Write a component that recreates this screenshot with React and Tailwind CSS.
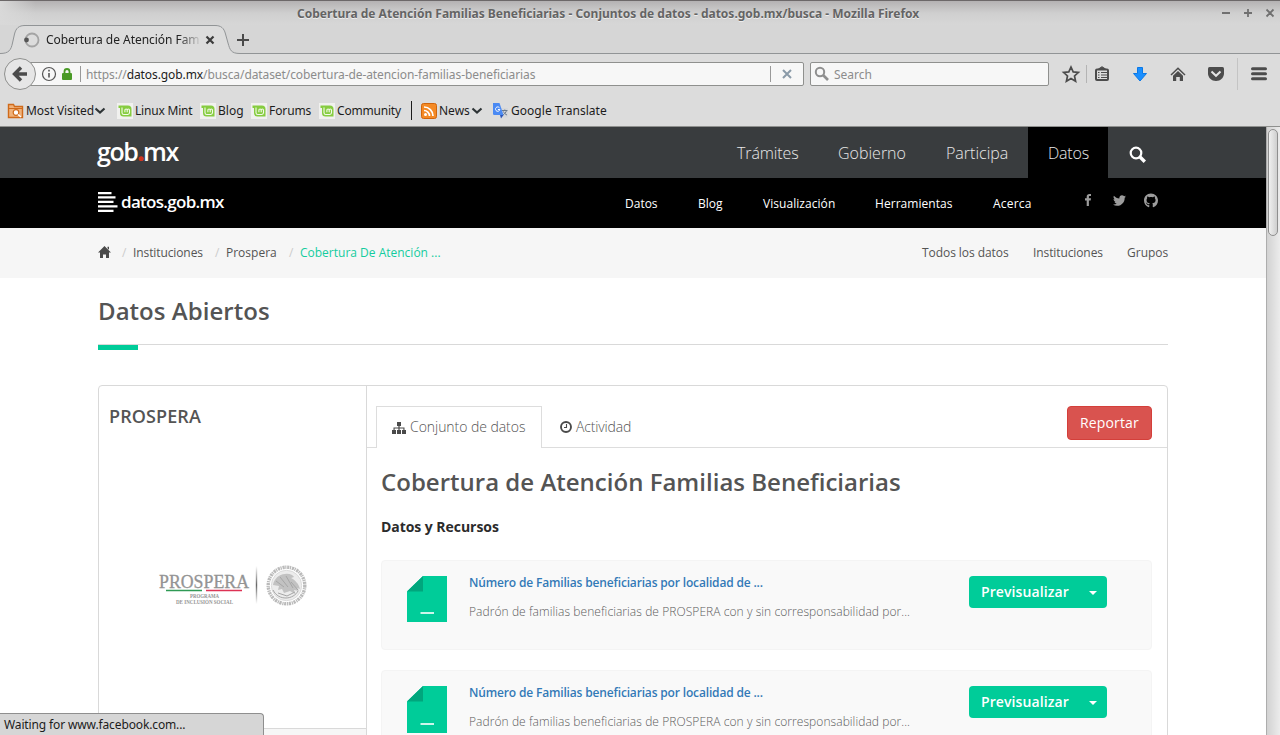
import React from 'react';
import { FaTwitter, FaGithub } from 'react-icons/fa';

const UI = "font-['Noto_Sans',sans-serif]";

function MintIcon() {
  return (
    <svg width="16" height="16" viewBox="0 0 16 16" className="shrink-0">
      <rect width="16" height="16" fill="#f1f1ef" />
      <path d="M1.500 2.500h9.500a3.500 3.500 0 0 1 3.500 3.500v7.500H6.500a3.500 3.500 0 0 1-3.500-3.500V5H1.500z" fill="#86cc40" />
      <path d="M5 4.500v5.300a1.800 1.800 0 0 0 1.800 1.700h4a1.800 1.800 0 0 0 1.700-1.700V7.200a1.100 1.100 0 0 0-2.300 0v2M10.200 7.200a1.100 1.100 0 0 0-2.300 0v2" fill="none" stroke="#f4fbea" strokeWidth="1.100" />
    </svg>
  );
}

function Chevron() {
  return (
    <svg width="12" height="8" viewBox="0 0 12 8" className="-mt-px shrink-0">
      <path d="M1.500 1.500l4.500 4 4.500-4" fill="none" stroke="#2e3436" strokeWidth="2.200" />
    </svg>
  );
}

function TitleBar() {
  return (
    <div className="flex h-[25px] shrink-0 border-t border-[#6c6869] bg-linear-to-b from-[#b4b2b3] via-[#cfcfcf] via-50% to-[#d7d7d7]">
      <div className="w-[297px] bg-linear-to-r from-[#d9d9d9] to-transparent to-12%" />
      <div className="w-[915px] pt-px text-[12px] leading-[24px] font-bold whitespace-nowrap text-[#646464] [text-shadow:0_1px_0_#eee]">
        Cobertura de Atención Familias Beneficiarias - Conjuntos de datos - datos.gob.mx/busca - Mozilla Firefox
      </div>
      <svg width="68" height="24" viewBox="1212 1 68 24" fill="none" stroke="#707070" strokeWidth="1.800">
        <path d="M1222 13h8M1244 13h8M1248 9v8M1266.500 9.500l7 7M1273.500 9.500l-7 7" />
      </svg>
    </div>
  );
}

function TabStrip() {
  return (
    <div className="relative flex h-[29px] shrink-0 items-center bg-[#d6d6d6]">
      <svg width="1280" height="29" viewBox="0 25 1280 29" className="absolute inset-0">
        <path d="M0 53.500C9 53.500 11 50 12.500 43L14.500 34C16 28 19 25.500 25 25.500H215C221 25.500 224 28 225.500 34L228 43C230 50 231 53.500 240 53.500H1280V54H0z" fill="#dcdcdc" />
        <path d="M0 53.500C9 53.500 11 50 12.500 43L14.500 34C16 28 19 25.500 25 25.500H215C221 25.500 224 28 225.500 34L228 43C230 50 231 53.500 240 53.500H1280" fill="none" stroke="#919496" />
        <circle cx="32" cy="40" r="6.500" fill="none" stroke="#a4a4a4" strokeWidth="1.800" />
        <circle cx="26.500" cy="40" r="2.400" fill="#555" />
        <path d="M206.500 36.500l7 7M213.500 36.500l-7 7" stroke="#3c3c3c" strokeWidth="2.200" />
        <path d="M237 40h12M243 34v12" stroke="#4a4a4a" strokeWidth="2" />
      </svg>
      <div className="relative ml-[46px] w-[156px] text-[12px] leading-[20px] tracking-[-0.04px] whitespace-nowrap text-[#222] [mask-image:linear-gradient(to_right,#000_85%,transparent)]">
        Cobertura de Atención Fam
      </div>
    </div>
  );
}

function NavBar() {
  return (
    <div className="flex h-[40px] shrink-0 items-center bg-[#dcdcdc] text-[12px]">
      <svg width="34" height="34" viewBox="0 0 34 34" className="z-10 ml-[3px] shrink-0">
        <circle cx="17" cy="17" r="15.500" fill="#e6e6e6" stroke="#8f908e" />
        <path d="M24 17H12.500M18 10.500L11.500 17l6.500 6.500" fill="none" stroke="#4c4c4c" strokeWidth="3.400" />
      </svg>
      <div className="-ml-[8px] flex h-[24px] w-[775px] items-center rounded-[2px] border border-[#8f908e] bg-[#f7f7f7]">
        <svg width="56" height="22" viewBox="30 63 56 22" className="shrink-0">
          <circle cx="49" cy="74" r="6.500" fill="none" stroke="#555" strokeWidth="1.200" />
          <path d="M49 73v4.500M49 69.800v1.800" stroke="#555" strokeWidth="1.600" />
          <path d="M64.500 73v-1.500a2.500 2.500 0 0 1 5 0V73" fill="none" stroke="#4a9a26" strokeWidth="1.800" />
          <rect x="62" y="73" width="10" height="7" rx="1" fill="#4a9a26" />
          <path d="M80.500 66v16" stroke="#999" />
        </svg>
        <div className="w-[684px] pt-[2px] tracking-[-0.09px] whitespace-nowrap text-[#8c8c8c]">
          https://<span className="text-[#1c1c1c]">datos.gob.mx</span>/busca/dataset/cobertura-de-atencion-familias-beneficiarias
        </div>
        <svg width="32" height="22" viewBox="770 63 32 22" className="shrink-0">
          <path d="M770.500 66v16" stroke="#999" />
          <path d="M783 70l8 8M791 70l-8 8" stroke="#8a9aa8" strokeWidth="2" />
        </svg>
      </div>
      <div className="ml-[6px] flex h-[24px] w-[239px] items-center rounded-[2px] border border-[#8f908e] bg-[#f7f7f7] text-[#8c8c8c]">
        <svg width="23" height="22" viewBox="811 63 23 22">
          <circle cx="820" cy="72" r="4.200" fill="none" stroke="#8f8f8f" strokeWidth="2" />
          <path d="M823 75l5 5" stroke="#8f8f8f" strokeWidth="2.600" />
        </svg>
        <span className="pt-[2px]">Search</span>
      </div>
      <svg width="231" height="40" viewBox="1049 54 231 40" fill="none" stroke="#4c4c4c">
        <path d="M1071 67l2.200 4.900 5.200.5-3.900 3.600 1.100 5.300-4.600-2.700-4.600 2.700 1.100-5.300-3.900-3.600 5.200-.5z" strokeWidth="1.700" />
        <path d="M1086.500 65v18" stroke="#b4b4b4" />
        <rect x="1096" y="69.500" width="12" height="10.500" rx="1" strokeWidth="2" />
        <path d="M1098.500 69l3.500-2.300 3.500 2.300z" fill="#4c4c4c" strokeWidth="1" />
        <path d="M1098 72.500h1.500M1101 72.500h6M1098 75h1.500M1101 75h6M1098 77.500h1.500M1101 77.500h6" strokeWidth="1.200" />
        <path d="M1137.500 67.500h5v6h4l-6.500 7.500-6.500-7.500h4z" fill="#1a8fff" stroke="#0a78e6" />
        <path d="M1171 75l7-6.800 7 6.800" strokeWidth="1.500" />
        <path d="M1173 75.700l5-4.800 5 4.800V81h-3.200v-4h-3.600v4H1173z" fill="#4c4c4c" stroke="none" />
        <path d="M1209.500 67h13q1.500 0 1.500 1.500v5c0 4-3.500 7.500-8 7.500s-8-3.500-8-7.500v-5q0-1.500 1.500-1.500z" fill="#4c4c4c" stroke="none" />
        <path d="M1211.500 71.500l4.500 4.300 4.500-4.300" stroke="#e4e4e4" strokeWidth="2" />
        <path d="M1237.500 58v32" stroke="#c4c4c4" />
        <path d="M1252.500 68.700h13M1252.500 73.700h13M1252.500 78.700h13" strokeWidth="3" strokeLinecap="round" />
      </svg>
    </div>
  );
}

function Bookmarks() {
  return (
    <div className="flex h-[33px] shrink-0 items-center border-b border-[#8f908e] bg-[#dcdcdc] pt-px pl-[7px] text-[12px] whitespace-nowrap text-[#1c1c1c]">
      <div className="flex w-[110px] items-center gap-[2px]">
        <svg width="17" height="16" viewBox="0 0 17 16">
          <path d="M1.500 14.500v-13h5l1 2h8v11z" fill="#f0b27a" stroke="#cf6a1a" strokeWidth="1.400" />
          <path d="M1.500 5.500h14" stroke="#cf6a1a" />
          <circle cx="9" cy="9.500" r="2.800" fill="#fff" stroke="#cf6a1a" strokeWidth="1.200" />
          <path d="M11 11.500l3 2.500" stroke="#fff" strokeWidth="1.500" />
        </svg>
        <span className="flex items-center pt-px tracking-[-0.08px]">Most Visited<Chevron /></span>
      </div>
      <div className="flex w-[83px] items-center gap-[2px]"><MintIcon /><span className="pt-px tracking-[-0.2px]">Linux Mint</span></div>
      <div className="flex w-[51px] items-center gap-[2px]"><MintIcon /><span className="pt-px">Blog</span></div>
      <div className="flex w-[68px] items-center gap-[2px]"><MintIcon /><span className="pt-px tracking-[-0.1px]">Forums</span></div>
      <div className="flex w-[92px] items-center gap-[2px]"><MintIcon /><span className="pt-px tracking-[-0.2px]">Community</span></div>
      <div className="h-[19px] w-px bg-[#1c1c1c]" />
      <div className="ml-[9px] flex w-[72px] items-center gap-[2px]">
        <svg width="16" height="16" viewBox="0 0 16 16" className="shrink-0">
          <rect x=".5" y=".5" width="15" height="15" rx="2" fill="#f48a25" stroke="#d0650c" />
          <circle cx="4.500" cy="11.500" r="1.500" fill="#fff" />
          <path d="M3 7.500a5.500 5.500 0 0 1 5.500 5.500M3 4a9 9 0 0 1 9 9" fill="none" stroke="#fff" strokeWidth="1.700" />
        </svg>
        <span className="flex items-center gap-px pt-px">News<Chevron /></span>
      </div>
      <div className="flex items-center gap-[2px]">
        <svg width="16" height="16" viewBox="0 0 16 16" className="shrink-0">
          <path d="M6 5h9v9.500H8z" fill="#d5d7da" />
          <path d="M9 7.500h5.500M11.800 6.500v1M13.500 7.500c-.5 2-2 3.500-3.500 4.500M10.500 8.500c.5 1.500 2 3 3.500 3.500" fill="none" stroke="#6b7a8c" />
          <path d="M0 0h6.500l4 12H1.200A1.200 1.200 0 0 1 0 10.800z" fill="#4a89f3" />
          <path d="M7 12h3.500L8 15.500z" fill="#2a55b8" />
          <path d="M6.500 4.800a2.200 2.200 0 1 0 .4 1.700H4.900" fill="none" stroke="#fff" strokeWidth="1" />
        </svg>
        <span className="pt-px tracking-[0.03px]">Google Translate</span>
      </div>
    </div>
  );
}

function SiteHeader() {
  return (
    <>
      <div className="flex h-[51px] shrink-0 bg-[#393c3e] pl-[97px] text-[16px] leading-[53px] font-light whitespace-nowrap text-[#e8e8e8]">
        <div className="w-[620px] text-[25px] leading-[49px] font-semibold tracking-[-1.45px] text-white">
          gob<span className="font-extrabold text-[#d0341c]">.</span>mx
        </div>
        <div className="w-[101px] pl-[20px] tracking-[-0.1px]">Trámites</div>
        <div className="w-[108px] pl-[20px]">Gobierno</div>
        <div className="w-[102px] pl-[20px]">Participa</div>
        <div className="w-[80px] bg-black pl-[20px] tracking-[-0.2px]">Datos</div>
        <svg width="60" height="51" viewBox="1108 127 60 51" fill="none" stroke="#fff">
          <circle cx="1136" cy="153" r="5.300" strokeWidth="2.200" />
          <path d="M1139.800 156.800l5 5" strokeWidth="3.400" />
        </svg>
      </div>
      <div className="flex h-[50px] shrink-0 bg-black pl-[98px] text-[12px] leading-[50px] whitespace-nowrap text-white">
        <svg width="23" height="50" viewBox="98 178 23 50" fill="#fff">
          <path d="M98 192h13.500v2.200H98zM98 196.300h17.500v2.200H98zM98 200.800h15.500v2.200H98zM98 205.300h19.500v2.200H98zM98 209.800h15.500v2.200H98z" />
        </svg>
        <div className="w-[504px] text-[17px] leading-[47px] font-semibold tracking-[-0.7px]">datos.gob.mx</div>
        <div className="w-[73px] pt-px">Datos</div>
        <div className="w-[65px] pt-px">Blog</div>
        <div className="w-[112px] pt-px tracking-[0.05px]">Visualización</div>
        <div className="w-[118px] pt-px tracking-[0.05px]">Herramientas</div>
        <div className="w-[92px] pt-px tracking-[0.2px]">Acerca</div>
        <div className="flex h-[44px] items-center text-[#9c9c9c]">
          <svg width="6" height="12" viewBox="0 0 6 12" fill="currentColor">
            <path d="M6 .1v1.900H4.900c-.9 0-1 .4-1 1v1.300H6l-.3 2.100H3.900V12H1.700V6.400H0V4.300h1.700V2.800C1.700 1 2.800 0 4.400 0 5.200 0 5.800.05 6 .1z" />
          </svg>
          <FaTwitter className="ml-[22px] h-[13px] w-[13px]" />
          <FaGithub className="ml-[18px] h-[15px] w-[14px]" />
        </div>
      </div>
    </>
  );
}

function Breadcrumb() {
  return (
    <div className="flex h-[50px] shrink-0 items-center bg-[#f6f6f6] pl-[98px] text-[12px] whitespace-nowrap text-[#545454]">
      <svg width="24" height="14" viewBox="0 0 24 14" fill="#4a4a4a">
        <path d="M6.500 0L13 6.500h-2v5.500H8V8.500H5V12H2V6.500H0zM9.500.8h1.500v3l-1.500-1.500z" />
      </svg>
      <span className="w-[11px] text-[#ccc]">/</span>
      <span className="w-[82px] tracking-[-0.1px]">Instituciones</span>
      <span className="w-[11px] text-[#ccc]">/</span>
      <span className="w-[63px]">Prospera</span>
      <span className="w-[11px] text-[#ccc]">/</span>
      <span className="w-[622px] text-[#14cc9e]">Cobertura De Atención ...</span>
      <span className="w-[111px] tracking-[-0.06px]">Todos los datos</span>
      <span className="w-[94px] tracking-[-0.1px]">Instituciones</span>
      <span>Grupos</span>
    </div>
  );
}

function ProsperaLogo() {
  return (
    <svg width="152" height="46" viewBox="158 563 152 46" className="ml-[59px]">
      <g fontFamily="Liberation Serif, serif" fill="#949494">
        <text x="159" y="587.500" fontSize="19" textLength="90" lengthAdjust="spacingAndGlyphs" stroke="#949494" strokeWidth=".3">PROSPERA</text>
        <text x="190" y="598" fontSize="5.500" fontWeight="700" textLength="29" lengthAdjust="spacingAndGlyphs">PROGRAMA</text>
        <text x="176" y="604" fontSize="5.500" fontWeight="700" textLength="57" lengthAdjust="spacingAndGlyphs">DE INCLUSIÓN SOCIAL</text>
      </g>
      <path d="M166 590.500h36" stroke="#2f9a55" strokeWidth="1.500" />
      <path d="M206 590.500h36" stroke="#dd3355" strokeWidth="1.500" />
      <path d="M255.800 566h1.400v38h-1.400z" fill="url(#rule)" />
      <defs>
        <linearGradient id="rule" x1="0" y1="0" x2="0" y2="1">
          <stop offset="0" stopColor="#fff" />
          <stop offset=".5" stopColor="#666" />
          <stop offset="1" stopColor="#fff" />
        </linearGradient>
      </defs>
      <circle cx="286.500" cy="585.500" r="18.300" fill="none" stroke="#bababa" strokeWidth="3.400" strokeDasharray="2.200 .6 1.200 .8" />
      <circle cx="286.500" cy="585.500" r="15.200" fill="#ececec" stroke="#d4d4d4" strokeWidth=".8" />
      <path d="M273 585c1-6 6-11 12-11 4-1 8 1 9 3l-3 1c4 2 8 6 9 11l-3-1 2 3-5-1 1 4-5-3-6 2-2-4-4 1 1-4z" fill="#c2c2c2" />
      <path d="M273 590c3 6 8 8 13 8s10-3 12-7M276 581l8 6M280 577l8 10M286 576l7 12M278 593l9 3 8-4M291 582l7 8" fill="none" stroke="#a6a6a6" />
    </svg>
  );
}

function Resource({ iconHeight }) {
  return (
    <div className="flex h-[90px] shrink-0 rounded-[4px] border border-[#f4f4f4] bg-[#f9f9f9] pt-[15px] pl-[25px]">
      <svg width="40" height={iconHeight} viewBox={`0 0 40 ${iconHeight}`}>
        <path d="M16 0h24v48H0V15.500z" fill="#00cc99" />
        <path d="M16 0v15.500H0z" fill="#00a67d" />
        <path d={`M13.500 ${iconHeight - 9}h13.500`} stroke="#fff" strokeWidth="1.600" />
      </svg>
      <div className="ml-[22px] w-[500px] whitespace-nowrap text-[12px]">
        <div className="leading-[13px] font-semibold tracking-[-0.16px] text-[#337ab7]">Número de Familias beneficiarias por localidad de ...</div>
        <div className="mt-[16px] leading-[13px] font-light tracking-[0.065px] text-[#5c5c5c]">Padrón de familias beneficiarias de PROSPERA con y sin corresponsabilidad por...</div>
      </div>
      <div className="flex h-[32px] w-[138px] items-center rounded-[4px] bg-[#00cc99] pl-[12px] text-[14px] font-semibold text-white">
        <span className="w-[108px] pb-[2px] tracking-[0.1px]">Previsualizar</span>
        <svg width="8" height="4" viewBox="0 0 8 4" className="mt-[2px]"><path d="M0 0h8L4 4z" fill="#fff" /></svg>
      </div>
    </div>
  );
}

export default function App() {
  return (
    <div className={`relative flex h-[735px] w-[1280px] flex-col overflow-hidden bg-white ${UI}`}>
      <TitleBar />
      <TabStrip />
      <NavBar />
      <Bookmarks />
      <div className="flex min-h-0 flex-1">
        <div className="flex w-[1266px] flex-col overflow-hidden bg-white font-['Open_Sans',sans-serif]">
          <SiteHeader />
          <Breadcrumb />
          <div className="mx-[98px] flex h-[67px] w-[1070px] shrink-0 items-center border-b border-[#d9d9d9] text-[24px] font-semibold tracking-[0.04px] text-[#545454]">Datos Abiertos</div>
          <div className="ml-[98px] h-[5px] w-[40px] shrink-0 bg-[#00cc99]" />
          <div className="mt-[35px] ml-[98px] flex h-[500px] w-[1070px] shrink-0 rounded-[4px] border border-[#d9d9d9]">
            <div className="flex w-[268px] shrink-0 flex-col border-r border-[#d9d9d9]">
              <div className="h-[177px] pt-[18px] pl-[10px] text-[18px] leading-[24px] font-semibold tracking-[0.1px] text-[#545454]">PROSPERA</div>
              <ProsperaLogo />
              <div className="mt-[119px] flex-1 border-t border-[#d9d9d9] bg-[#f6f6f6]" />
            </div>
            <div className="flex flex-1 flex-col">
              <div className="flex h-[62px] shrink-0 items-end whitespace-nowrap text-[14px] font-light text-[#545454]">
                <div className="h-full w-[9px] border-b border-[#ddd]" />
                <div className="flex h-[42px] w-[166px] items-center gap-[4px] border border-b-0 border-[#ddd] pl-[15px]">
                  <svg width="14" height="12" viewBox="0 0 14 12" fill="#4a4a4a">
                    <path d="M5 0h4v4H7.600v1.500H12.500V8H14v4h-4V8h1.400V6.600H7.600V8H9v4H5V8h1.400V6.600H2.600V8H4v4H0V8h1.500V5.500h4.900V4H5z" />
                  </svg>
                  <span className="pb-[2px] tracking-[-0.05px]">Conjunto de datos</span>
                </div>
                <div className="flex h-[42px] flex-1 items-center gap-[4px] border-b border-[#ddd] pt-px pl-[18px]">
                  <svg width="12" height="12" viewBox="0 0 12 12" fill="none" stroke="#4a4a4a">
                    <circle cx="6" cy="6" r="5" strokeWidth="1.900" />
                    <path d="M6.500 3v3.500H4" strokeWidth="1.100" />
                  </svg>
                  <span className="pb-[2px] tracking-[-0.15px]">Actividad</span>
                </div>
                <div className="h-full w-[100px] border-b border-[#ddd] pt-[20px]">
                  <div className="h-[34px] w-[85px] rounded-[4px] border border-[#d43f3a] bg-[#d9534f] pl-[12px] leading-[32px] font-normal tracking-[0.15px] text-white">Reportar</div>
                </div>
              </div>
              <div className="flex flex-1 flex-col pr-[15px] pl-[14px]">
                <div className="mt-[18px] text-[24px] leading-[32px] font-semibold tracking-[0.01px] whitespace-nowrap text-[#545454]">Cobertura de Atención Familias Beneficiarias</div>
                <div className="mt-[19px] mb-[23px] text-[14px] leading-[20px] font-bold tracking-[-0.05px] text-[#2b2b2b]">Datos y Recursos</div>
                <div className="flex flex-col gap-[20px]">
                  <Resource iconHeight={46} />
                  <Resource iconHeight={47} />
                </div>
              </div>
            </div>
          </div>
        </div>
        <div className="w-[14px] border-l border-[#adadad] bg-linear-to-r from-[#d2d2d2] to-[#ececec] pt-[2px] pl-px">
          <div className="h-[107px] w-[10px] rounded-[5px] border border-[#8f8f8f] bg-linear-to-r from-[#f0f0f0] to-[#cfcfcf]" />
        </div>
      </div>
      <div className="absolute bottom-0 left-0 h-[22px] w-[264px] rounded-tr-[4px] border-t border-r border-[#8f8f8f] bg-[#d6d6d6] pl-[4px] text-[12px] leading-[21px] tracking-[-0.13px] text-[#1c1c1c]">
        Waiting for www.facebook.com...
      </div>
    </div>
  );
}
